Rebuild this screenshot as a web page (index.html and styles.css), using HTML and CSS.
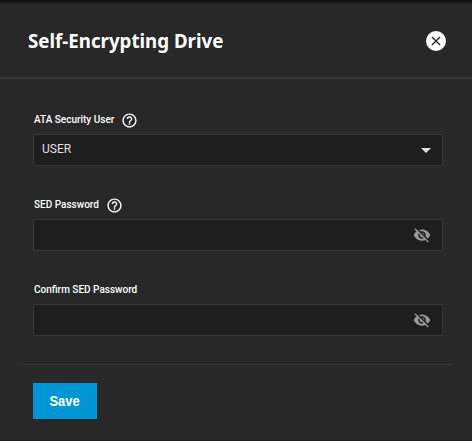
FILE: index.html
```html
<!DOCTYPE html>
<html lang="en">
<head>
<meta charset="utf-8">
<title>Self-Encrypting Drive</title>
<link rel="stylesheet" href="styles.css">
</head>
<body>
<svg class="defs" aria-hidden="true">
  <symbol id="help" viewBox="0 0 24 24"><path d="M11 18h2v-2h-2v2zm1-16C6.480 2 2 6.480 2 12s4.480 10 10 10 10-4.480 10-10S17.520 2 12 2zm0 18c-4.410 0-8-3.590-8-8s3.590-8 8-8 8 3.590 8 8-3.590 8-8 8zm0-14c-2.210 0-4 1.790-4 4h2c0-1.100.9-2 2-2s2 .9 2 2c0 2-3 1.750-3 5h2c0-2.250 3-2.500 3-5 0-2.210-1.790-4-4-4z"/></symbol>
  <symbol id="hidden" viewBox="0 0 24 24"><path d="M12 7c2.760 0 5 2.240 5 5 0 .65-.13 1.260-.36 1.830l2.920 2.920c1.510-1.260 2.700-2.890 3.430-4.750-1.730-4.390-6-7.500-11-7.500-1.400 0-2.740.25-3.980.7l2.160 2.160C10.740 7.130 11.350 7 12 7zM2 4.270l2.280 2.280.46.46C3.080 8.300 1.780 10.020 1 12c1.730 4.390 6 7.500 11 7.500 1.550 0 3.030-.3 4.380-.84l.42.42L19.730 22 21 20.730 3.270 3 2 4.270zM7.530 9.800l1.550 1.550c-.05.21-.08.43-.08.65 0 1.660 1.340 3 3 3 .22 0 .44-.03.65-.08l1.550 1.550c-.67.33-1.410.53-2.200.53-2.760 0-5-2.240-5-5 0-.79.2-1.530.53-2.200zm4.310-.78l3.150 3.150.02-.16c0-1.660-1.340-3-3-3l-.17.01z"/></symbol>
</svg>
<section class="panel">
  <header class="header">
    <h1 class="title">Self-Encrypting Drive</h1>
    <button class="close" aria-label="Close"><svg viewBox="0 0 24 24"><path d="M12 0a12 12 0 1 0 0 24 12 12 0 0 0 0-24zm5.500 16.300L16.300 17.500 12 13.200 7.700 17.500 6.500 16.300l4.300-4.300L6.500 7.700 7.700 6.500l4.300 4.300L16.300 6.500 17.500 7.700 13.200 12z"/></svg></button>
  </header>
  <form class="form">
    <div class="field">
      <div class="label"><span>ATA Security User</span><svg class="help"><use href="#help"/></svg></div>
      <div class="control"><span class="value">USER</span><i class="arrow"></i></div>
    </div>
    <div class="field">
      <div class="label"><span>SED Password</span><svg class="help"><use href="#help"/></svg></div>
      <div class="control"><svg class="eye"><use href="#hidden"/></svg></div>
    </div>
    <div class="field">
      <div class="label"><span>Confirm SED Password</span></div>
      <div class="control"><svg class="eye"><use href="#hidden"/></svg></div>
    </div>
  </form>
  <footer class="actions"><button class="save" type="button"><span>Save</span></button></footer>
</section>
</body>
</html>
```

FILE: styles.css
```css
* { box-sizing: border-box; }
body { margin: 0; background: #282828; color: #fff; font-family: Roboto, sans-serif; overflow: hidden; }
button { border: 0; padding: 0; }
.defs { display: none; }
.panel { height: 441px; border-top: 2px solid #111; border-bottom: 1px solid #211d1f; box-shadow: inset 0 2px #1e1e1e; }
.header { display: flex; align-items: center; justify-content: space-between; height: 77px; padding: 2px 26px 0 28px; border-bottom: 2px solid #383838; }
.title { margin: 0; font: 700 20px/30px "Noto Sans", sans-serif; white-space: nowrap; transform: scaleX(.935); transform-origin: left; }
.close { display: flex; width: 20px; height: 20px; background: none; }
.close svg { width: 20px; height: 20px; fill: #fff; }
.form { padding: 30px 29px 0 33px; }
.field { height: 85px; }
.label { display: flex; align-items: center; height: 25px; padding: 0 0 3px 1px; font-size: 10px; font-weight: 500; line-height: 14px; }
.label span { margin-top: 0; }
.help { width: 17px; height: 17px; margin: 1px 0 0 7px; fill: #fff; }
.control { display: flex; align-items: center; justify-content: space-between; height: 32px; border: 1px solid #383838; border-radius: 1px; background: #1e1e1e; }
.value { margin: -2px 0 0 8px; font-size: 12px; line-height: 16px; color: #e0e0e0; }
.arrow { width: 10px; height: 5px; margin: 1px 11px 0 0; background: #e0e0e0; clip-path: polygon(0 0, 100% 0, 50% 100%); }
.eye { width: 18px; height: 18px; margin: -1px 11px 0 auto; fill: #999; }
.actions { margin: 0 19px 0 23px; padding: 18px 10px; border-top: 1px solid #383838; }
.save { display: block; width: 64px; height: 36px; background: #0095d5; color: #fff; font: 700 15px/36px "Liberation Sans", sans-serif; }
.save span { display: inline-block; transform: scaleX(.86); }
```
